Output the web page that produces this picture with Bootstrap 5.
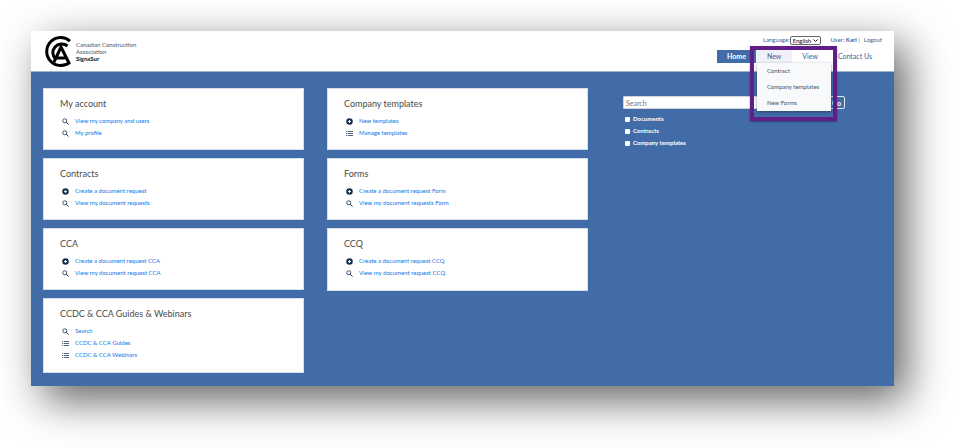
<!DOCTYPE html>
<html lang="en">
<head>
<meta charset="utf-8">
<meta name="viewport" content="width=device-width, initial-scale=1">
<title>SignaSur</title>
<link href="https://cdn.jsdelivr.net/npm/bootstrap@5.3.0/dist/css/bootstrap.min.css" rel="stylesheet">
<style>
:root { --brand: #426ca8; --ink: #3b5f9a; --violet: #5f1f87; }
body { font-family: Lato, "Open Sans", sans-serif; font-size: 6px; line-height: 12px; background: #fff; padding: 31px 62px 62px 31px; }
a { text-decoration: none; }
.app-shell { background: var(--brand); box-shadow: 12px 14px 40px rgba(0, 0, 0, .62); }
.app-header { background: #fff; border-bottom: 1px solid #9fb4cf; padding: 4px 12px 4px 13px; }
.brand-mark { width: 28px; height: 32px; }
.brand-text { font-size: 6px; line-height: 7px; color: #555; margin: 6px 0 0 4px; }
.brand-text strong { color: #111; }
.user-bar { color: var(--ink); line-height: 10px; }
.user-bar a { color: var(--ink); }
.user-name { margin-left: 10px; }
.lang-select { appearance: none; font-size: 6px; line-height: 7px; height: 9px; width: 31px; padding: 0 8px 0 2px; border: 1px solid #666; border-radius: 2px; color: #111;
  background: #fff url("data:image/svg+xml,%3Csvg xmlns='http://www.w3.org/2000/svg' viewBox='0 0 10 6'%3E%3Cpath d='M1 1l4 4 4-4' fill='none' stroke='%23111' stroke-width='2'/%3E%3C/svg%3E") no-repeat right 2px center / 5px 3px; }
.main-nav { font-size: 7px; line-height: 13px; margin-top: 5px; }
.main-nav .nav-link { padding: 0 10px; color: var(--ink); }
.main-nav .nav-link.active { background: var(--brand); color: #fff; font-weight: 700; }
.main-nav .nav-link.opened { background: #f0f1f8; padding: 0 11px; }
.menu-frame { top: -4px; left: -6px; width: 87px; height: 75px; border: 4px solid var(--violet); z-index: 5; box-shadow: 0 1px 2px rgba(0, 0, 0, .35); }
.new-menu { top: 13px; left: 1px; width: 74px; background: #f8f9fb; box-shadow: 0 1px 3px rgba(0, 0, 0, .4); z-index: 6; }
.new-menu a { display: block; font-size: 6px; line-height: 16px; padding: 0 10px; color: #44505c; white-space: nowrap; }
.app-main { padding: 16px 11px 5px 0; }
.tile-col { padding: 0 11px 0 12px; }
.tile { border: 1px solid #d5deeb; background: #fff; padding: 8px 16px 10px; margin-bottom: 8px; }
.tile:last-child { padding-bottom: 11px; }
.tile h2 { font-size: 9px; line-height: 13px; margin: 0 0 5px; color: #4a4a4a; font-weight: 400; }
.tile li { display: flex; align-items: center; gap: 6px; padding-left: 2px; }
.tile li a { color: #0d75e8; }
.tile svg { width: 7px; height: 7px; color: #15304f; }
.tile svg.list-icon { color: #56677d; }
.search-col { padding: 8px 38px 0 24px; }
.search-box { height: 13px; font-size: 7px; line-height: 11px; padding: 0 2px; border: 1px solid #ced4da; border-radius: 1px; flex: 1 1 0; min-width: 0; }
.search-box::placeholder { color: #777; }
.go-btn { height: 13px; font-size: 7px; font-weight: 700; line-height: 10px; padding: 0 3px 0 6px; border: 1px solid #dfe7f2; border-radius: 2px; background: transparent; color: #fff; margin-left: 4px; }
.filters { margin-top: 4px; }
.filter { color: #fff; font-weight: 700; }
.filter input { width: 5px; height: 5px; margin: 0 3px 0 2px; appearance: none; background: #fff; border-radius: 1px; }
.filter input:checked { background: #0d75e8; }
</style>
</head>
<body>
<svg class="d-none">
  <symbol id="find" viewBox="0 0 14 14"><circle cx="5.5" cy="5.5" r="4" fill="none" stroke="currentColor" stroke-width="1.6"/><path d="M8.500 8.500L13 13" stroke="currentColor" stroke-width="2"/></symbol>
  <symbol id="plus" viewBox="0 0 14 14"><circle cx="7" cy="7" r="6.500" fill="currentColor"/><path d="M7 4v6M4 7h6" stroke="#fff" stroke-width="1.800"/></symbol>
  <symbol id="list" viewBox="0 0 14 14"><path d="M0 3h2.500M4 3h10M0 7h2.500M4 7h10M0 11h2.500M4 11h10" stroke="currentColor" stroke-width="2"/></symbol>
</svg>
<div class="app-shell">
  <header class="app-header d-flex justify-content-between">
    <a href="#" class="d-flex align-items-start">
      <svg class="brand-mark" viewBox="0 0 28 32" fill="none" stroke="#000" role="img" aria-label="Canadian Construction Association">
        <path d="M26 6A14 14 0 1 0 26 27" stroke-width="3"/>
        <path d="M23.500 11A8.500 8.500 0 1 0 12 24.500" stroke-width="3"/>
        <path d="M10 27L17 12L25 28M12 23H23" stroke-width="3"/>
      </svg>
      <span class="brand-text">Canadian Construction<br>Association<br><strong>SignaSur</strong></span>
    </a>
    <div class="d-flex flex-column align-items-end">
      <div class="user-bar d-flex align-items-center">
        <label for="lang">Language:</label>
        <select id="lang" class="lang-select"><option>English</option><option>Français</option></select>
        <span class="user-name">User: <strong>Karl</strong> |</span>
        <a href="#" class="ms-1">Logout</a>
      </div>
      <nav class="main-nav d-flex">
        <a class="nav-link active" href="#">Home</a>
        <div class="position-relative">
          <a class="nav-link opened" href="#">New</a>
          <div class="menu-frame position-absolute"></div>
          <div class="new-menu position-absolute">
            <a href="#">Contract</a>
            <a href="#">Company templates</a>
            <a href="#">New Forms</a>
          </div>
        </div>
        <a class="nav-link" href="#">View</a>
        <a class="nav-link" href="#">Contact Us</a>
      </nav>
    </div>
  </header>
  <main class="app-main">
    <div class="row g-0">
      <div class="col-4 tile-col">
        <section class="tile">
          <h2>My account</h2>
          <ul class="list-unstyled m-0">
            <li><svg><use href="#find"/></svg><a href="#">View my company and users</a></li>
            <li><svg><use href="#find"/></svg><a href="#">My profile</a></li>
          </ul>
        </section>
        <section class="tile">
          <h2>Contracts</h2>
          <ul class="list-unstyled m-0">
            <li><svg><use href="#plus"/></svg><a href="#">Create a document request</a></li>
            <li><svg><use href="#find"/></svg><a href="#">View my document requests</a></li>
          </ul>
        </section>
        <section class="tile">
          <h2>CCA</h2>
          <ul class="list-unstyled m-0">
            <li><svg><use href="#plus"/></svg><a href="#">Create a document request CCA</a></li>
            <li><svg><use href="#find"/></svg><a href="#">View my document request CCA</a></li>
          </ul>
        </section>
        <section class="tile">
          <h2>CCDC &amp; CCA Guides &amp; Webinars</h2>
          <ul class="list-unstyled m-0">
            <li><svg><use href="#find"/></svg><a href="#">Search</a></li>
            <li><svg class="list-icon"><use href="#list"/></svg><a href="#">CCDC &amp; CCA Guides</a></li>
            <li><svg class="list-icon"><use href="#list"/></svg><a href="#">CCDC &amp; CCA Webinars</a></li>
          </ul>
        </section>
      </div>
      <div class="col-4 tile-col">
        <section class="tile">
          <h2>Company templates</h2>
          <ul class="list-unstyled m-0">
            <li><svg><use href="#plus"/></svg><a href="#">New templates</a></li>
            <li><svg class="list-icon"><use href="#list"/></svg><a href="#">Manage templates</a></li>
          </ul>
        </section>
        <section class="tile">
          <h2>Forms</h2>
          <ul class="list-unstyled m-0">
            <li><svg><use href="#plus"/></svg><a href="#">Create a document request Form</a></li>
            <li><svg><use href="#find"/></svg><a href="#">View my document requests Form</a></li>
          </ul>
        </section>
        <section class="tile">
          <h2>CCQ</h2>
          <ul class="list-unstyled m-0">
            <li><svg><use href="#plus"/></svg><a href="#">Create a document request CCQ</a></li>
            <li><svg><use href="#find"/></svg><a href="#">View my document request CCQ</a></li>
          </ul>
        </section>
      </div>
      <div class="col-4 search-col">
        <form class="d-flex">
          <input class="search-box" type="search" placeholder="Search" aria-label="Search">
          <button class="go-btn" type="submit">Go</button>
        </form>
        <div class="filters">
          <div class="filter d-flex align-items-center"><input type="checkbox" id="f-doc"><label for="f-doc">Documents</label></div>
          <div class="filter d-flex align-items-center"><input type="checkbox" id="f-con"><label for="f-con">Contracts</label></div>
          <div class="filter d-flex align-items-center"><input type="checkbox" id="f-tpl"><label for="f-tpl">Company templates</label></div>
        </div>
      </div>
    </div>
  </main>
</div>
<script src="https://cdn.jsdelivr.net/npm/bootstrap@5.3.0/dist/js/bootstrap.bundle.min.js"></script>
</body>
</html>
